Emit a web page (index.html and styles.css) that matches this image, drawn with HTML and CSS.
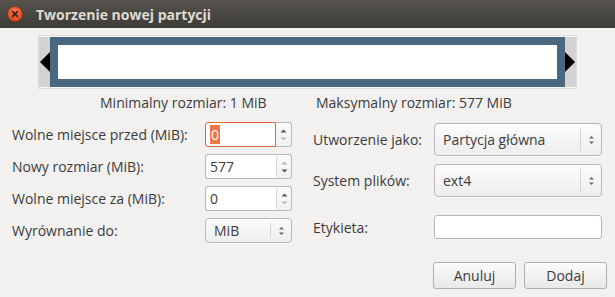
FILE: index.html
```html
<!DOCTYPE html>
<html lang="pl">
<head>
<meta charset="utf-8">
<title>Tworzenie nowej partycji</title>
<link rel="stylesheet" href="styles.css">
</head>
<body>
<div class="window">
  <header class="titlebar">
    <span class="close">
      <svg width="16" height="16" viewBox="0 0 16 16">
        <defs>
          <radialGradient id="cg" cx="50%" cy="35%" r="65%">
            <stop offset="0" stop-color="#f47a4b"/>
            <stop offset="1" stop-color="#d8461a"/>
          </radialGradient>
        </defs>
        <circle cx="8" cy="8" r="7.5" fill="url(#cg)" stroke="#8a2a0c" stroke-width="0.6"/>
        <path d="M5.6 5.6 L10.4 10.4 M10.4 5.6 L5.6 10.4" stroke="#3a1a10" stroke-width="1.5" stroke-linecap="round"/>
      </svg>
    </span>
    <span class="title">Tworzenie nowej partycji</span>
  </header>

  <main class="content">
    <div class="bar">
      <div class="handle">
        <svg width="10" height="20" viewBox="0 0 10 20"><path d="M10 0 L0 10 L10 20 Z" fill="#000"/></svg>
      </div>
      <div class="part"><div class="part-inner"></div></div>
      <div class="handle">
        <svg width="10" height="20" viewBox="0 0 10 20"><path d="M0 0 L10 10 L0 20 Z" fill="#000"/></svg>
      </div>
    </div>

    <div class="limits">
      <span>Minimalny rozmiar: 1 MiB</span>
      <span>Maksymalny rozmiar: 577 MiB</span>
    </div>

    <div class="form">
      <div class="col col-left">
        <div class="row">
          <label class="lbl">Wolne miejsce przed (MiB):</label>
          <div class="spin focus">
            <span class="val"><span class="sel">0</span></span>
            <span class="stepper">
              <svg width="7" height="14" viewBox="0 0 7 14"><path d="M0.5 4.5 L3.5 1.5 L6.5 4.5 Z" fill="#555"/><path d="M0.5 9.5 L3.5 12.5 L6.5 9.5 Z" fill="#b8b8b8"/></svg>
            </span>
          </div>
        </div>
        <div class="row">
          <label class="lbl">Nowy rozmiar (MiB):</label>
          <div class="spin">
            <span class="val">577</span>
            <span class="stepper">
              <svg width="7" height="14" viewBox="0 0 7 14"><path d="M0.5 4.5 L3.5 1.5 L6.5 4.5 Z" fill="#b8b8b8"/><path d="M0.5 9.5 L3.5 12.5 L6.5 9.5 Z" fill="#555"/></svg>
            </span>
          </div>
        </div>
        <div class="row">
          <label class="lbl">Wolne miejsce za (MiB):</label>
          <div class="spin">
            <span class="val">0</span>
            <span class="stepper">
              <svg width="7" height="14" viewBox="0 0 7 14"><path d="M0.5 4.5 L3.5 1.5 L6.5 4.5 Z" fill="#555"/><path d="M0.5 9.5 L3.5 12.5 L6.5 9.5 Z" fill="#b8b8b8"/></svg>
            </span>
          </div>
        </div>
        <div class="row">
          <label class="lbl">Wyrównanie do:</label>
          <div class="combo small">
            <span class="ctext">MiB</span>
            <span class="carrow">
              <svg width="7" height="12" viewBox="0 0 7 12"><path d="M1 4.5 L3.5 2 L6 4.5 Z" fill="#666"/><path d="M1 7.5 L3.5 10 L6 7.5 Z" fill="#666"/></svg>
            </span>
          </div>
        </div>
      </div>

      <div class="col col-right">
        <div class="rrow">
          <label class="rlbl">Utworzenie jako:</label>
          <div class="combo big">
            <span class="ctext">Partycja główna</span>
            <span class="carrow">
              <svg width="7" height="12" viewBox="0 0 7 12"><path d="M1 4.5 L3.5 2 L6 4.5 Z" fill="#666"/><path d="M1 7.5 L3.5 10 L6 7.5 Z" fill="#666"/></svg>
            </span>
          </div>
        </div>
        <div class="rrow">
          <label class="rlbl">System plików:</label>
          <div class="combo big">
            <span class="ctext">ext4</span>
            <span class="carrow">
              <svg width="7" height="12" viewBox="0 0 7 12"><path d="M1 4.5 L3.5 2 L6 4.5 Z" fill="#666"/><path d="M1 7.5 L3.5 10 L6 7.5 Z" fill="#666"/></svg>
            </span>
          </div>
        </div>
        <div class="rrow entry-row">
          <label class="rlbl">Etykieta:</label>
          <div class="entry"></div>
        </div>
      </div>
    </div>

    <div class="actions">
      <button class="btn">Anuluj</button>
      <button class="btn">Dodaj</button>
    </div>
  </main>
</div>
</body>
</html>
```

FILE: styles.css
```css
html, body {
  margin: 0;
  padding: 0;
}

body {
  width: 615px;
  height: 297px;
  overflow: hidden;
  background: #f2f1f0;
  font-family: "Open Sans", "Noto Sans", "DejaVu Sans", sans-serif;
  font-size: 14px;
  color: #3c3c3c;
}

.window {
  width: 615px;
  height: 297px;
  display: flex;
  flex-direction: column;
}

.titlebar {
  height: 28px;
  flex: none;
  display: flex;
  align-items: center;
  background: linear-gradient(#56534d, #3c3b37);
}

.close {
  width: 16px;
  height: 16px;
  margin-left: 7px;
  margin-top: -1px;
  display: flex;
}

.title {
  margin-left: 13px;
  font-weight: bold;
  font-size: 14px;
  color: #dfdbd2;
}

.content {
  padding-top: 7px;
}

/* partition bar */
.bar {
  margin-left: 38px;
  width: 539px;
  height: 54px;
  box-sizing: border-box;
  border: 1px solid #dcdcdc;
  padding: 1px 0;
  display: flex;
  background: #f7f7f7;
}

.handle {
  width: 11px;
  background: #d3d3d3;
  display: flex;
  align-items: center;
  justify-content: flex-end;
}

.handle:last-child {
  justify-content: flex-start;
}

.part {
  flex: 1;
  background: #4a6780;
  padding: 8px;
  display: flex;
}

.part-inner {
  flex: 1;
  background: #ffffff;
}

/* limits */
.limits {
  margin-top: 5px;
  padding-left: 100px;
  display: grid;
  grid-template-columns: 216px auto;
  line-height: 18px;
}

/* form */
.form {
  margin-top: 10px;
  display: flex;
}

.col-left {
  width: 313px;
  box-sizing: border-box;
  padding-left: 12px;
  display: flex;
  flex-direction: column;
  gap: 7px;
}

.row {
  height: 25px;
  display: flex;
  align-items: center;
}

.lbl {
  width: 193px;
}

.spin {
  width: 87px;
  height: 25px;
  display: flex;
  box-sizing: border-box;
}

.val {
  flex: 1;
  display: flex;
  align-items: center;
  padding-left: 4px;
  background: #fff;
  border: 1px solid #b9b9b9;
  border-right: none;
  border-radius: 3px 0 0 3px;
}

.spin.focus .val {
  border-color: #e3683a;
  border-right: 1px solid #e3683a;
}

.sel {
  background: #f07746;
  color: #fff;
  line-height: 19px;
  padding: 0 1px;
}

.stepper {
  width: 16px;
  box-sizing: border-box;
  border: 1px solid #b9b9b9;
  border-left: 1px solid #dadada;
  border-radius: 0 3px 3px 0;
  background: linear-gradient(#fbfbfb, #f0f0f0);
  display: flex;
  align-items: center;
  justify-content: center;
}

.spin.focus .stepper {
  border-left: none;
}

.combo {
  box-sizing: border-box;
  border: 1px solid #b7b7b7;
  border-radius: 4px;
  background: linear-gradient(#fcfcfc, #ededed);
  box-shadow: 0 1px 0 rgba(255, 255, 255, 0.7);
  display: flex;
  align-items: center;
}

.combo.small {
  width: 87px;
  height: 25px;
}

.combo.big {
  width: 168px;
  height: 33px;
}

.ctext {
  flex: 1;
  padding-left: 8px;
}

.carrow {
  width: 20px;
  align-self: stretch;
  margin: 4px 0;
  border-left: 1px solid #d4d4d4;
  display: flex;
  align-items: center;
  justify-content: center;
}

.col-right {
  padding-top: 1px;
  display: flex;
  flex-direction: column;
  gap: 8px;
}

.rrow {
  display: flex;
  align-items: center;
}

.rlbl {
  width: 121px;
}

.entry-row {
  margin-top: 10px;
}

.entry {
  width: 168px;
  height: 24px;
  box-sizing: border-box;
  border: 1px solid #b7b7b7;
  border-radius: 3px;
  background: #fff;
}

/* buttons */
.actions {
  margin-top: 19px;
  display: flex;
  justify-content: flex-end;
  gap: 8px;
  padding-right: 8px;
}

.btn {
  width: 83px;
  height: 27px;
  box-sizing: border-box;
  border: 1px solid #adadad;
  border-radius: 3px;
  background: linear-gradient(#fbfbfb, #e9e9e9);
  font-family: inherit;
  font-size: 14px;
  color: #3c3c3c;
  padding: 0;
}
```
